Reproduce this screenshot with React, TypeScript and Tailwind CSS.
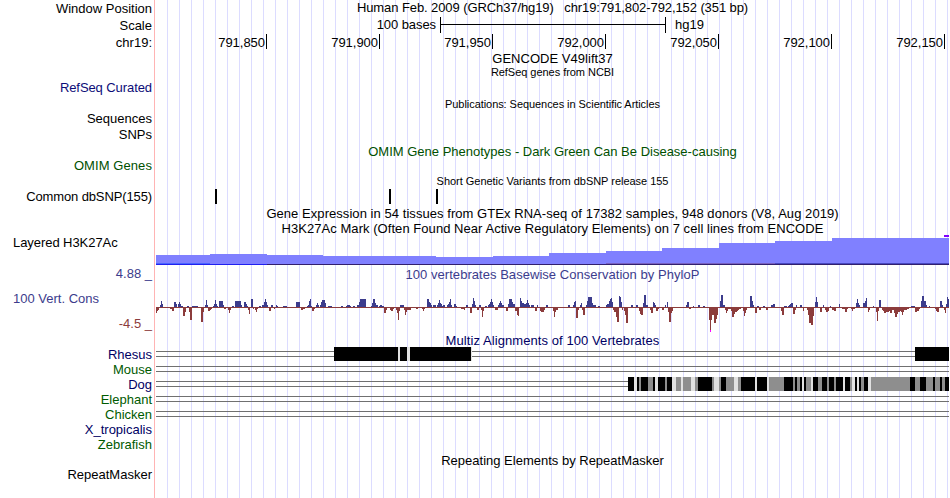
import type { ReactNode } from 'react';
import clsx from 'clsx';

// All x values below are pixels on the full browser image, the plot itself starts here
const PLOT_X = 156;

const ticks = ['791,850', '791,900', '791,950', '792,000', '792,050', '792,100', '792,150'];

const snps = [215, 389, 436];

// [start, end, top] of every H3K27Ac step
const h3k27: [number, number, number][] = [
    [156, 210, 20], [210, 267, 19], [267, 323, 20], [323, 436, 21], [436, 493, 22],
    [493, 549, 21], [549, 606, 18], [606, 662, 16], [662, 719, 13], [719, 775, 8],
    [775, 832, 6], [832, 949, 3],
];

// [x, width, score], anything not listed is the one pixel base line
const phylop: [number, number, number][] = [
    [156, 1, -6], [157, 1, -4], [158, 1, -3], [160, 1, 2], [161, 1, 6], [162, 1, 3],
    [170, 2, -2], [172, 2, -4], [174, 2, 5], [176, 1, 3], [178, 1, 3], [179, 1, 5], [180, 1, 3],
    [181, 2, 1], [183, 2, -9], [185, 1, -5], [187, 2, 1], [189, 1, -5], [190, 2, -13], [192, 6, 1],
    [201, 2, -15], [203, 1, -5], [205, 1, 2], [206, 1, 7], [207, 1, 2], [208, 2, -4], [210, 1, -3],
    [211, 1, -2], [213, 1, 1], [214, 1, 3], [215, 1, 7], [216, 1, 3], [217, 1, 1], [219, 4, 6],
    [223, 1, 2], [224, 2, -2], [228, 1, -3], [229, 1, -6], [230, 1, -3], [232, 2, 1], [235, 6, 6],
    [241, 1, 2], [244, 2, 5], [246, 1, 3], [247, 1, 1], [248, 1, -3], [249, 1, -7], [251, 2, 8],
    [253, 1, -2], [255, 1, -3], [256, 1, -5], [257, 1, -2], [259, 2, 1], [262, 1, 2], [263, 1, 2],
    [264, 1, 5], [265, 1, 8], [266, 1, 5], [267, 1, 2], [269, 2, -4], [271, 2, 2], [274, 1, -2],
    [276, 1, 2], [277, 1, 1], [283, 4, 1], [296, 4, 5], [301, 2, -3], [303, 2, -2], [307, 1, 1],
    [308, 1, 2], [309, 1, 6], [310, 1, 8], [311, 1, 1], [312, 2, -4], [314, 1, -2], [316, 1, 2],
    [317, 1, 4], [318, 1, 2], [320, 1, 2], [321, 1, 5], [322, 3, 7], [325, 1, 4], [328, 4, 1],
    [341, 2, 1], [346, 1, 1], [347, 3, 2], [350, 1, 1], [353, 2, 1], [357, 1, 2], [358, 1, 2],
    [359, 1, 5], [360, 6, 8], [371, 1, 1], [372, 1, 4], [373, 2, 8], [375, 1, 4], [376, 2, 2],
    [379, 1, 1], [380, 2, 2], [382, 2, 1], [384, 2, -6], [386, 1, -3], [390, 1, -3], [391, 2, -4],
    [393, 1, -2], [396, 1, -3], [397, 1, -6], [398, 1, -13], [399, 1, -4], [400, 4, 2],
    [404, 1, -3], [405, 1, -8], [406, 1, -5], [407, 4, -3], [416, 2, -2], [422, 1, -2],
    [423, 1, -4], [424, 1, -2], [427, 2, 8], [429, 1, 5], [430, 1, 4], [431, 1, 2], [433, 3, 2],
    [437, 1, 2], [438, 1, 4], [439, 1, 7], [440, 1, 4], [441, 1, 3], [442, 1, 1], [443, 2, 2],
    [447, 1, 2], [448, 1, 3], [449, 1, 5], [450, 1, 8], [451, 1, 2], [454, 2, 3], [456, 1, 1],
    [461, 3, -2], [464, 1, -3], [466, 2, 2], [470, 2, -6], [472, 1, 3], [473, 1, 9], [474, 1, 6],
    [475, 1, 2], [477, 2, -3], [479, 2, 2], [481, 1, -3], [482, 1, -10], [483, 1, -4], [485, 2, 1],
    [488, 1, 2], [489, 1, 3], [490, 1, 5], [491, 1, 8], [492, 1, 5], [493, 1, 2], [495, 3, -3],
    [498, 1, 2], [499, 1, 4], [500, 1, 6], [501, 1, 4], [502, 2, 2], [506, 2, -4], [508, 1, 3],
    [509, 3, 8], [512, 1, 5], [513, 2, 3], [515, 2, -4], [517, 1, -8], [518, 1, -9], [520, 1, 9],
    [521, 1, 6], [522, 2, 4], [524, 2, 3], [526, 1, 4], [527, 1, 7], [528, 1, 4], [529, 1, 2],
    [531, 3, 2], [535, 2, -4], [537, 1, 2], [540, 1, -4], [541, 3, -5], [544, 1, -3], [546, 2, 2],
    [553, 1, -4], [554, 1, -10], [555, 1, -5], [556, 2, -3], [568, 2, 2], [573, 1, 2],
    [574, 1, 5], [575, 1, 6], [576, 2, -11], [578, 1, -3], [580, 1, 2], [581, 1, 4], [582, 1, -3],
    [583, 2, -8], [586, 1, 2], [587, 1, 6], [588, 4, 10], [592, 1, 4], [593, 3, 2], [598, 2, 1],
    [606, 1, 2], [607, 2, 3], [609, 1, 6], [610, 1, 8], [611, 1, 9], [612, 1, 5], [613, 1, -3],
    [614, 2, -5], [616, 1, -10], [617, 2, -15], [619, 1, 11], [620, 1, 10], [621, 1, 5],
    [622, 1, -3], [624, 1, -4], [625, 1, -8], [626, 2, -16], [631, 2, 2], [636, 2, 2],
    [639, 1, -4], [640, 1, -7], [641, 2, -8], [643, 1, 4], [644, 2, 12], [646, 2, 2],
    [650, 1, -3], [651, 2, -6], [653, 1, 5], [654, 1, 4], [655, 1, 2], [656, 2, -4], [658, 1, -2],
    [662, 2, -3], [665, 1, 2], [667, 1, 5], [668, 1, -5], [669, 2, -15], [671, 1, -6], [672, 1, -4],
    [686, 1, 2], [687, 2, 5], [689, 2, -2], [693, 1, 1], [698, 2, 2], [703, 2, 1], [709, 1, -13],
    [710, 1, -23], [711, 1, -13], [712, 2, -8], [714, 2, -16], [716, 1, -12], [717, 1, -8],
    [720, 1, 6], [721, 2, 12], [723, 2, 2], [725, 1, -3], [726, 1, -6], [727, 1, -4], [728, 3, -2],
    [731, 1, -4], [732, 2, -10], [734, 1, -7], [735, 2, -5], [737, 1, -4], [738, 1, -3],
    [739, 2, -2], [743, 1, -4], [744, 1, -9], [745, 1, -6], [746, 1, -3], [750, 2, 11],
    [752, 1, 6], [753, 1, 2], [755, 2, -6], [757, 2, 1], [759, 2, -3], [763, 2, 1], [766, 2, -3],
    [771, 2, 2], [773, 2, 3], [781, 1, -4], [782, 2, -8], [784, 3, 1], [788, 1, 1], [789, 1, 2],
    [790, 1, 3], [791, 2, 4], [793, 2, -7], [795, 1, -3], [796, 1, 2], [800, 2, 2], [803, 1, -4],
    [807, 1, -3], [808, 1, -8], [809, 2, -16], [811, 2, -18], [813, 1, -9], [815, 1, 5],
    [816, 1, 10], [817, 1, 5], [820, 2, -5], [823, 1, 2], [825, 1, -3], [826, 2, -5], [828, 1, -4],
    [830, 1, 1], [832, 2, -3], [834, 2, -4], [839, 1, 3], [842, 3, -2], [845, 2, -5], [847, 1, -2],
    [851, 1, -2], [852, 1, -4], [853, 2, -2], [856, 1, 4], [857, 1, 8], [858, 1, 4], [859, 1, 2],
    [863, 1, 4], [864, 1, 4], [865, 1, 6], [866, 1, 9], [868, 1, -5], [869, 1, -3], [873, 1, 1],
    [876, 1, -5], [877, 1, -14], [878, 1, -4], [879, 2, 7], [882, 1, -3], [883, 1, -4],
    [884, 2, -6], [886, 3, -5], [889, 1, -4], [890, 2, -6], [892, 2, -3], [894, 1, -6],
    [895, 2, -10], [897, 1, -7], [898, 2, -5], [900, 1, -4], [901, 1, -5], [902, 1, -8],
    [903, 1, -5], [904, 3, -3], [907, 2, -2], [911, 4, 1], [915, 2, -5], [917, 2, -4],
    [919, 1, -2], [921, 1, 6], [922, 2, 11], [924, 1, 6], [925, 1, 6], [926, 1, 2], [929, 1, 1],
    [935, 1, -2], [936, 1, -4], [937, 2, -5], [940, 2, 6], [942, 1, 2], [944, 1, -3],
    [945, 1, -6], [946, 1, 3], [947, 1, 10], [948, 1, 8],
];

// Alignment blocks: [start, end, shade]
type Block = [number, number, 'k' | 'g' | 'l'];

const shades = { k: '#000000', g: '#8e8e8e', l: '#e1e1e1' };

const rhesus: Block[] = [
    [334, 398, 'k'], [398, 400, 'l'], [400, 407, 'k'], [407, 410, 'l'], [410, 471, 'k'],
    [471, 472, 'l'], [915, 949, 'k'],
];

const dog: Block[] = [
    [628, 634, 'k'], [634, 637, 'l'], [637, 639, 'k'], [639, 641, 'g'], [641, 648, 'k'],
    [648, 653, 'g'], [653, 655, 'k'], [655, 658, 'l'], [658, 665, 'k'], [665, 667, 'g'],
    [667, 672, 'k'], [672, 676, 'l'], [676, 681, 'g'], [681, 683, 'l'], [683, 691, 'g'],
    [691, 695, 'l'], [695, 698, 'g'], [698, 712, 'k'], [712, 714, 'g'], [714, 719, 'l'],
    [719, 721, 'g'], [721, 726, 'k'], [726, 734, 'g'], [734, 738, 'l'], [738, 741, 'g'],
    [741, 755, 'k'], [755, 757, 'l'], [757, 767, 'k'], [767, 769, 'l'], [769, 784, 'g'],
    [784, 793, 'k'], [793, 795, 'g'], [795, 797, 'k'], [797, 800, 'g'], [800, 802, 'k'],
    [802, 804, 'l'], [804, 806, 'k'], [806, 811, 'g'], [811, 813, 'l'], [813, 818, 'k'],
    [818, 822, 'g'], [822, 827, 'k'], [827, 829, 'g'], [829, 834, 'k'], [834, 836, 'g'],
    [836, 843, 'k'], [843, 845, 'l'], [845, 850, 'k'], [850, 852, 'g'], [852, 855, 'l'],
    [855, 857, 'k'], [857, 859, 'l'], [859, 861, 'k'], [861, 864, 'g'], [864, 868, 'k'],
    [868, 871, 'l'], [871, 910, 'g'], [910, 915, 'k'], [915, 920, 'g'], [920, 926, 'k'],
    [926, 933, 'g'], [933, 935, 'k'], [935, 940, 'g'], [940, 942, 'k'], [942, 945, 'g'],
    [945, 949, 'k'],
];

const species: { name: string; color: string; blocks?: Block[] }[] = [
    { name: 'Rhesus', color: 'text-[#000064]', blocks: rhesus },
    { name: 'Mouse', color: 'text-[#005a00]', blocks: [] },
    { name: 'Dog', color: 'text-[#000064]', blocks: dog },
    { name: 'Elephant', color: 'text-[#005a00]', blocks: [] },
    { name: 'Chicken', color: 'text-[#005a00]', blocks: [] },
    { name: 'X_tropicalis', color: 'text-[#000064]' },
    { name: 'Zebrafish', color: 'text-[#005a00]' },
];

type RowProps = { h: string; label?: ReactNode; labelClass?: string; children?: ReactNode; className?: string };

function Row({ h, label, labelClass = 'pt-px', children, className }: RowProps) {
    return (
        <div className={clsx('flex shrink-0', h)}>
            <div
                className={clsx(
                    'w-[155px] shrink-0 border-r border-[#ffb4b4] pr-0.5 flex items-start justify-end',
                    labelClass
                )}
            >
                {label}
            </div>
            <div className={clsx('ml-px w-[793px] flex items-start justify-center', className)}>{children}</div>
        </div>
    );
}

function Plot({ height, children }: { height: number; children: ReactNode }) {
    return (
        <svg
            width={793}
            height={height}
            viewBox={`${PLOT_X} 0 793 ${height}`}
            shapeRendering="crispEdges"
            className="block shrink-0"
        >
            {children}
        </svg>
    );
}

function Alignment({ blocks }: { blocks: Block[] }) {
    return (
        <Plot height={15}>
            <rect x={156} y={4} width={793} height={1} fill="#707070" />
            <rect x={156} y={9} width={793} height={1} fill="#707070" />
            {blocks.map(([start, end, shade]) => (
                <rect key={start} x={start} y={0} width={end - start} height={14} fill={shades[shade]} />
            ))}
        </Plot>
    );
}

export default function App() {
    return (
        <div className="w-[950px] h-[498px] overflow-hidden bg-white bg-[repeating-linear-gradient(to_right,transparent_0_11px,#dcdcff_11px_12px)] bg-[position:156px_0] bg-no-repeat flex flex-col font-['Liberation_Sans',Arial,sans-serif] text-[13px] leading-none text-black whitespace-pre">
            <Row h="h-4" label="Window Position" labelClass="pt-0.5" className="pt-px tracking-[-0.09px]">
                Human Feb. 2009 (GRCh37/hg19)   chr19:791,802-792,152 (351 bp)
            </Row>
            <Row h="h-[18px]" label="Scale" labelClass="pt-[3px]" className="!justify-start">
                <span className="w-[280px] pt-0.5 text-right tracking-[-0.08px]">100 bases</span>
                <span className="ml-1 mr-[9px] mt-px w-[226px] h-4 border-x border-black pt-[7px]">
                    <span className="block h-px bg-black" />
                </span>
                <span className="pt-0.5">hg19</span>
            </Row>
            <Row h="h-[17px]" label="chr19:" labelClass="pt-0.5" className="!justify-start">
                {ticks.map((t, i) => (
                    <span
                        key={t}
                        className={clsx(
                            'h-[15px] border-r border-black pt-0.5 pr-px text-right shrink-0 tracking-[-0.03px]',
                            i === 0 ? 'w-[111px]' : 'w-[113px]'
                        )}
                    >
                        {t}
                    </span>
                ))}
            </Row>
            <Row h="h-[15px]" className="pt-px tracking-[0.03px]">GENCODE V49lift37</Row>
            <Row h="h-3.5" className="pt-px text-[11px] tracking-[-0.04px]">RefSeq genes from NCBI</Row>
            <Row h="h-4" label="RefSeq Curated" labelClass="pt-px text-[#0c0c78] tracking-[-0.08px]" />
            <Row h="h-[15px]" className="pt-[3px] text-[11px] tracking-[-0.06px]">
                Publications: Sequences in Scientific Articles
            </Row>
            <Row h="h-[15px]" label="Sequences" />
            <Row h="h-[17px]" label="SNPs" labelClass="pt-0.5" />
            <Row h="h-[15px]" className="pt-0.5 text-[#005000]">
                OMIM Gene Phenotypes - Dark Green Can Be Disease-causing
            </Row>
            <Row h="h-3.5" label="OMIM Genes" labelClass="pt-px text-[#005000] tracking-[0.08px]" />
            <Row h="h-[17px]" className="pt-1 text-[11px] tracking-[-0.03px]">
                Short Genetic Variants from dbSNP release 155
            </Row>
            <Row h="h-[15px]" label="Common dbSNP(155)" labelClass="pt-px tracking-[-0.12px]">
                <Plot height={15}>
                    {snps.map((x) => (
                        <rect key={x} x={x} y={0} width={2} height={15} />
                    ))}
                </Plot>
            </Row>
            <Row h="h-[17px]" className="pt-[3px] tracking-[0.055px]">
                Gene Expression in 54 tissues from GTEx RNA-seq of 17382 samples, 948 donors (V8, Aug 2019)
            </Row>
            <Row h="h-3.5" className="pt-px tracking-[0.05px]">
                H3K27Ac Mark (Often Found Near Active Regulatory Elements) on 7 cell lines from ENCODE
            </Row>

            {/* Layered H3K27Ac */}
            <Row h="h-[30px]" label="Layered H3K27Ac" labelClass="!justify-start pl-[13px] pt-px tracking-[-0.06px]">
                <Plot height={30}>
                    {h3k27.map(([start, end, top]) => (
                        <rect key={start} x={start} y={top} width={end - start} height={30 - top} fill="#8080ff" />
                    ))}
                    <rect x={156} y={28} width={54} height={1} fill="#4a64ff" />
                    <rect x={606} y={28} width={169} height={1} fill="#7860c0" />
                    <rect x={775} y={28} width={174} height={1} fill="#4848c0" />
                    <rect x={156} y={29} width={111} height={1} fill="#2020f0" />
                    <rect x={267} y={29} width={682} height={1} fill="#32206e" />
                    <rect x={944} y={0} width={5} height={2} fill="#8000ff" />
                </Plot>
            </Row>

            {/* PhyloP conservation */}
            <Row
                h="h-[18px]"
                label="4.88 _"
                labelClass="pt-0.5 text-[#3c3c8c]"
                className="pt-[3px] text-[#3c3c8c] tracking-[0.04px]"
            >
                100 vertebrates Basewise Conservation by PhyloP
            </Row>
            <Row
                h="h-[50px]"
                labelClass="flex-col !items-stretch !justify-start"
                label={
                    <>
                        <span className="h-[33px] pl-[13px] pt-[9px] text-[#3c3c8c]">100 Vert. Cons</span>
                        <span className="h-[17px] pt-px text-right text-[#8c3c3c]">-4.5 _</span>
                    </>
                }
            >
                <Plot height={50}>
                    <rect x={156} y={24} width={793} height={1} fill="#8c3c3c" />
                    {phylop.map(([x, w, score]) =>
                        score > 0 ? (
                            <rect key={x} x={x} y={24 - score} width={w} height={score} fill="#3c3c8c" />
                        ) : (
                            <rect key={x} x={x} y={24} width={w} height={-score} fill="#8c3c3c" />
                        )
                    )}
                    <rect x={710} y={47} width={1} height={2} fill="#ff00ff" />
                </Plot>
            </Row>

            {/* Multiz */}
            <Row h="h-3.5" className="pt-px text-[#000064] tracking-[0.08px]">Multiz Alignments of 100 Vertebrates</Row>
            {species.map((s) => (
                <Row key={s.name} h="h-[15px]" label={s.name} labelClass={clsx('pt-px', s.color)}>
                    {s.blocks && <Alignment blocks={s.blocks} />}
                </Row>
            ))}

            <Row h="h-4" className="pt-0.5">Repeating Elements by RepeatMasker</Row>
            <Row h="h-3.5" label="RepeatMasker" labelClass="pt-0" />
            <Row h="h-4" />
        </div>
    );
}
